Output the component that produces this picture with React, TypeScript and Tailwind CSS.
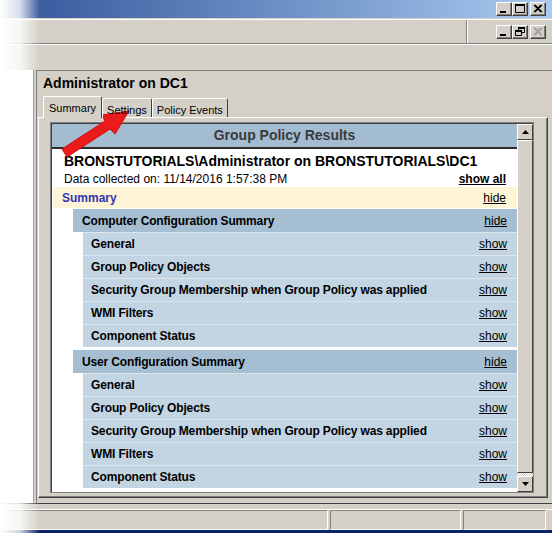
import React from "react";

const computerRows = [
  "General",
  "Group Policy Objects",
  "Security Group Membership when Group Policy was applied",
  "WMI Filters",
  "Component Status",
];

function WinButton({ kind, disabled }: { kind: "min" | "max" | "close" | "restore"; disabled?: boolean }) {
  const c = disabled ? "#a0a0a0" : "#000";
  return (
    <div className="w-[16px] h-[14px] bg-[#d4d0c8] border border-t-white border-l-white border-r-[#404040] border-b-[#404040] shadow-[inset_-1px_-1px_#808080] flex items-center justify-center">
      <svg width="14" height="12" viewBox="0 0 14 12">
        {kind === "min" && <rect x="3" y="8" width="6" height="2" fill={c} />}
        {kind === "max" && (
          <path d="M2.5 1.5h9v8h-9z M2 2.5h10" stroke={c} strokeWidth="1" fill="none" />
        )}
        {kind === "max" && <rect x="2" y="1" width="10" height="2" fill={c} />}
        {kind === "close" && (
          <path d="M3 2l7 7M10 2l-7 7M4 2l7 7M11 2l-7 7" stroke={c} strokeWidth="1.2" />
        )}
        {kind === "restore" && (
          <g fill="none" stroke={c}>
            <path d="M5.5 1.5h6v5h-6z" />
            <rect x="5" y="1" width="7" height="2" fill={c} stroke="none" />
            <path d="M2.5 4.5h6v5h-6z" fill="#d4d0c8" />
            <rect x="2" y="4" width="7" height="2" fill={c} stroke="none" />
          </g>
        )}
      </svg>
    </div>
  );
}

function Section({ title, rows }: { title: string; rows: string[] }) {
  return (
    <div>
      <div className="ml-[21px] h-[23px] bg-[#a5bed2] flex items-center justify-between pl-[9px] pr-[10px] text-[12px]">
        <span className="font-bold tracking-[-0.15px]">{title}</span>
        <span className="underline">hide</span>
      </div>
      {rows.map((r) => (
        <div
          key={r}
          className="ml-[31px] h-[23px] bg-[#c3d5e3] border-t border-[#dde4ea] flex items-center justify-between pl-[8px] pr-[10px] text-[12px]"
        >
          <span className="font-bold tracking-[-0.15px]">{r}</span>
          <span className="underline">show</span>
        </div>
      ))}
    </div>
  );
}

export default function App() {
  return (
    <div className="relative w-[552px] h-[533px] overflow-hidden bg-[#d4d0c8] flex flex-col font-['Liberation_Sans',Arial,sans-serif] text-black">
      {/* title bar */}
      <div className="relative h-[19px] shrink-0 flex items-start justify-end pt-[2px] pr-[6px] bg-linear-to-r from-[#34559a] to-[#a9cbf0] border-b border-[#d4d0c8]">
        <div className="flex">
          <WinButton kind="min" />
          <WinButton kind="max" />
          <div className="w-[2px]" />
          <WinButton kind="close" />
        </div>
      </div>
      {/* menu bar */}
      <div className="h-[25px] shrink-0 flex items-center justify-end border-t border-white border-b border-b-[#808080]">
        <div className="h-full border-l border-[#808080] shadow-[inset_1px_0_white] pl-[29px] pr-[6px] flex items-center">
          <WinButton kind="min" />
          <WinButton kind="restore" />
          <div className="w-[2px]" />
          <WinButton kind="close" disabled />
        </div>
      </div>
      {/* toolbar */}
      <div className="h-[26px] shrink-0 border-t border-white" />

      {/* main */}
      <div className="h-[433px] shrink-0 flex">
        <div className="w-[34px] bg-white border-r border-[#a0a0a0]" />
        <div className="w-[2px]" />
        <div className="flex-1 flex flex-col border-l border-[#808080] border-t border-t-[#808080] pr-[4px]">
          <div className="pl-[6px] pt-[3px] h-[24px] text-[14px] font-bold leading-[18px]">Administrator on DC1</div>
          {/* tabs */}
          <div className="h-[22px] flex items-end pl-[6px] text-[11px] relative z-10">
            <div className="h-[22px] px-[5px] pt-[3px] bg-[#d4d0c8] border border-b-0 border-t-white border-l-white border-r-[#404040] rounded-t-[2px] -mb-[1px]">
              Summary
            </div>
            <div className="h-[19px] px-[4px] pt-[3px] border border-b-0 border-t-white border-l-white border-r-[#404040] rounded-t-[2px]">
              Settings
            </div>
            <div className="h-[19px] px-[4px] pt-[3px] border border-b-0 border-t-white border-l-white border-r-[#404040] rounded-t-[2px]">
              Policy Events
            </div>
          </div>
          {/* tab panel */}
          <div className="ml-[1px] h-[381px] border border-t-white border-l-white border-r-[#404040] border-b-[#404040] shadow-[inset_-1px_-1px_#808080] pl-[11px] pt-[4px] pr-[13px] pb-[4px] flex">
            <div className="flex-1 flex border border-[#808080] shadow-[inset_1px_1px_#404040]">
              {/* browser content */}
              <div className="w-[465px] ml-[1px] mt-[1px] bg-white flex flex-col">
                <div className="h-[25px] shrink-0 bg-[#a4bcd1] border-b-2 border-[#2e2e2e] flex items-center justify-center text-[14px] font-bold text-[#3a3a3a]">
                  Group Policy Results
                </div>
                <div className="pl-[12px] pt-[3px] text-[14px] font-bold leading-[18px]">
                  BRONSTUTORIALS\Administrator on BRONSTUTORIALS\DC1
                </div>
                <div className="pl-[12px] pr-[11px] pt-[2px] h-[17px] flex justify-between text-[12px] leading-[14px]">
                  <span>Data collected on: 11/14/2016 1:57:38 PM</span>
                  <span className="font-bold underline">show all</span>
                </div>
                <div className="ml-[1px] h-[21px] bg-[#fdf5d6] flex items-center justify-between pl-[9px] pr-[11px] text-[12px]">
                  <span className="font-bold text-[#3333b0]">Summary</span>
                  <span className="underline">hide</span>
                </div>
                <div className="h-[1px]" />
                <Section title="Computer Configuration Summary" rows={computerRows} />
                <div className="h-[3px]" />
                <Section title="User Configuration Summary" rows={computerRows} />
              </div>
              {/* scrollbar */}
              <div className="w-[16px] mt-[1px] flex flex-col bg-[#e8e6e1]">
                <div className="h-[16px] bg-[#d4d0c8] border border-t-white border-l-white border-r-[#404040] border-b-[#404040] flex items-center justify-center">
                  <svg width="7" height="4" viewBox="0 0 7 4"><path d="M3.5 0L7 4H0z" fill="#000" /></svg>
                </div>
                <div className="h-[333px] bg-[#d4d0c8] border border-t-white border-l-white border-r-[#404040] border-b-[#404040]" />
                <div className="flex-1 bg-[repeating-conic-gradient(#fff_0_25%,#d4d0c8_0_50%)] bg-[length:2px_2px]" />
                <div className="h-[16px] bg-[#d4d0c8] border border-t-white border-l-white border-r-[#404040] border-b-[#404040] flex items-center justify-center">
                  <svg width="7" height="4" viewBox="0 0 7 4"><path d="M0 0H7L3.5 4z" fill="#000" /></svg>
                </div>
              </div>
            </div>
          </div>
        </div>
      </div>

      {/* status bar */}
      <div className="flex-1 border-t border-[#404040] flex flex-col">
        <div className="h-[6px] border-b border-white" />
        <div className="flex-1 flex pr-[6px]">
          <div className="w-[328px] border border-t-[#808080] border-l-[#808080] border-r-white border-b-white" />
          <div className="w-[2px]" />
          <div className="w-[131px] border border-t-[#808080] border-l-[#808080] border-r-white border-b-white" />
          <div className="w-[2px]" />
          <div className="flex-1 border border-t-[#808080] border-l-[#808080] border-r-white border-b-white" />
        </div>
        <div className="h-[3px] bg-[#0a246a]" />
      </div>

      {/* left fade overlays */}
      <div className="pointer-events-none absolute left-0 top-0 w-[40px] h-[70px] bg-linear-to-r from-white via-white/80 to-transparent" />
      <div className="pointer-events-none absolute left-0 bottom-0 w-[40px] h-[32px] bg-linear-to-r from-white via-white/80 to-transparent" />

      {/* red arrow */}
      <svg className="pointer-events-none absolute left-0 top-0" width="552" height="533">
        <polygon
          points="67,157 62,149 105,121 102,115 129,111 115,134 110,129"
          fill="#ec1b1b"
          stroke="#d01010"
          strokeWidth="1"
          strokeLinejoin="round"
        />
      </svg>
    </div>
  );
}
